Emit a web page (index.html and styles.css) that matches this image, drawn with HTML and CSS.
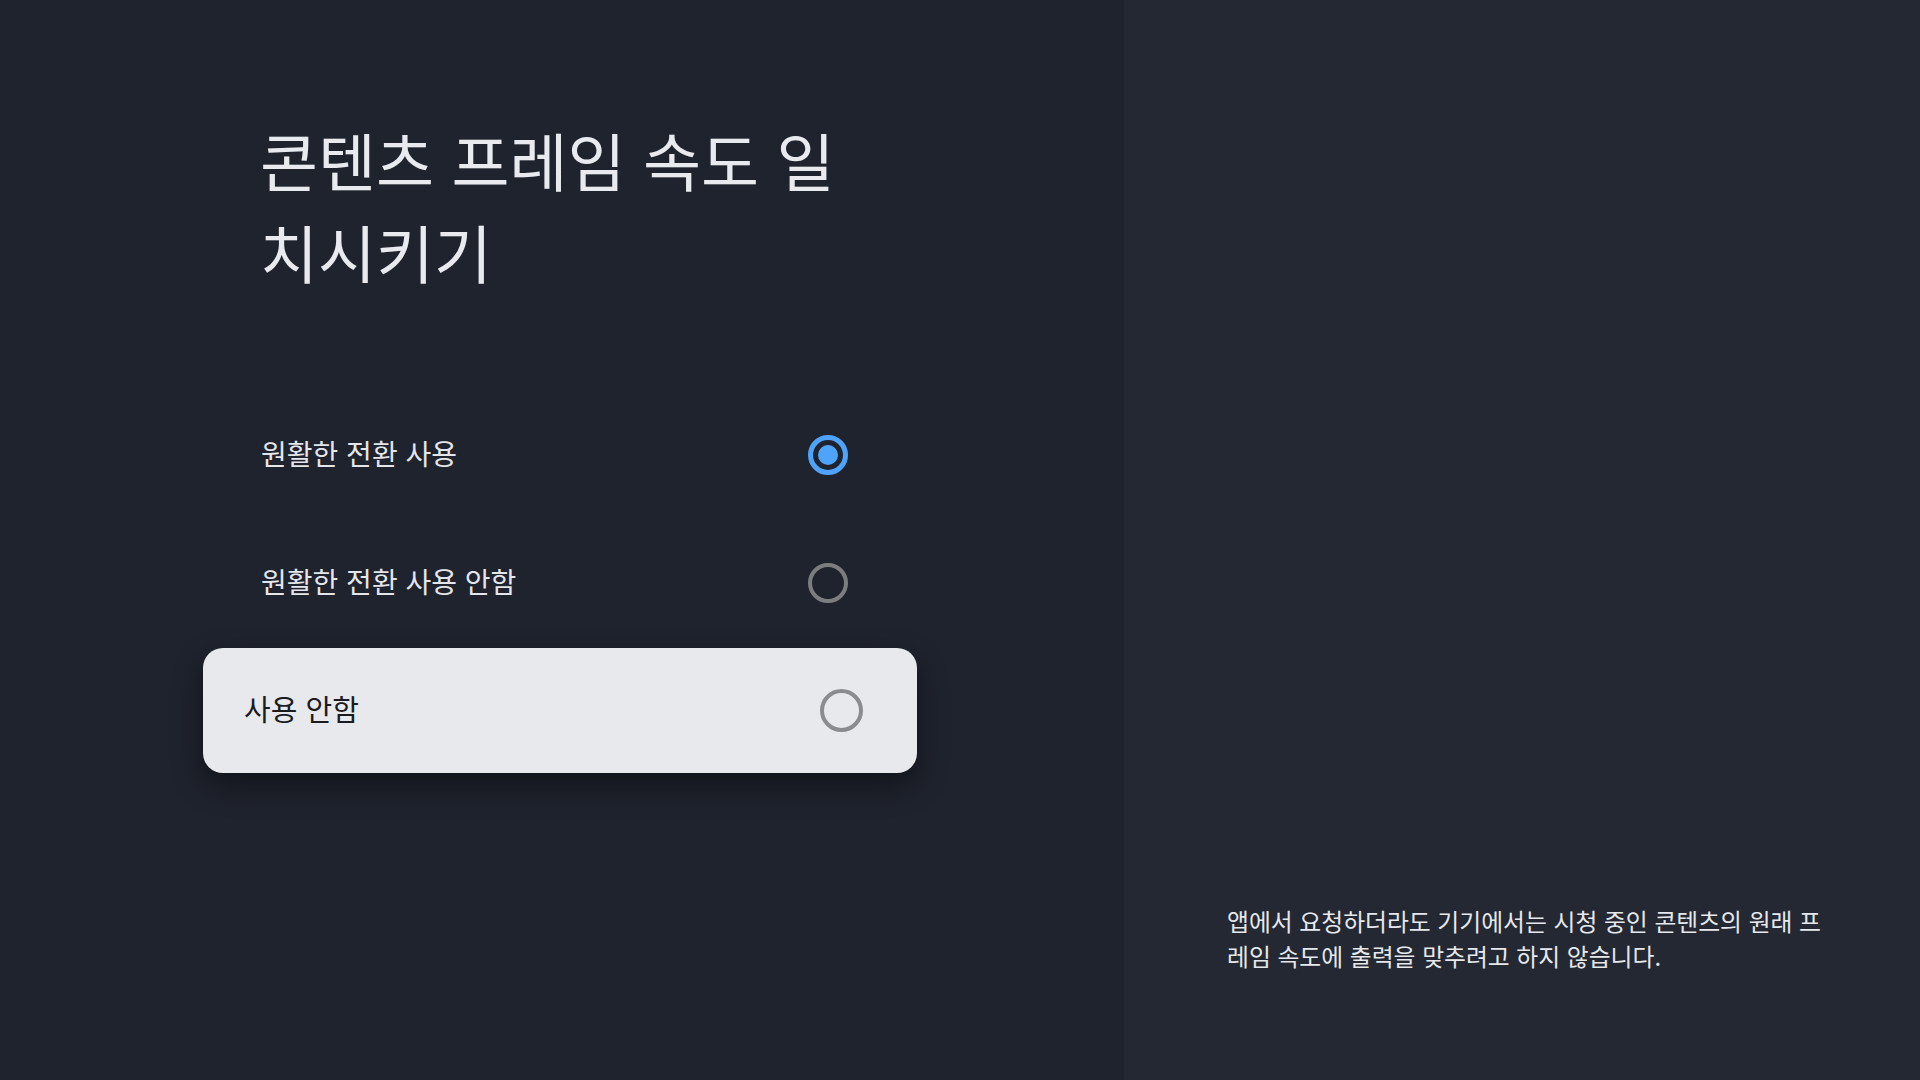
FILE: index.html
```html
<!DOCTYPE html>
<html lang="ko">
<head>
<meta charset="utf-8">
<title>콘텐츠 프레임 속도 일치시키기</title>
<link rel="stylesheet" href="styles.css">
</head>
<body>
<div class="screen">
  <section class="main">
    <h1 class="title">콘텐츠 프레임 속도 일치시키기</h1>
    <ul class="options">
      <li class="option">
        <span class="label">원활한 전환 사용</span>
        <span class="radio radio-on"><span class="dot"></span></span>
      </li>
      <li class="option">
        <span class="label">원활한 전환 사용 안함</span>
        <span class="radio"></span>
      </li>
      <li class="option option-focused">
        <span class="label">사용 안함</span>
        <span class="radio"></span>
      </li>
    </ul>
  </section>
  <aside class="side">
    <p class="desc">앱에서 요청하더라도 기기에서는 시청 중인 콘텐츠의 원래 프<br>레임 속도에 출력을 맞추려고 하지 않습니다.</p>
  </aside>
</div>
</body>
</html>
```
FILE: styles.css
```css
* { box-sizing: border-box; }
html, body {
  margin: 0;
  padding: 0;
  width: 1920px;
  height: 1080px;
  overflow: hidden;
}
body {
  font-family: "Noto Sans CJK KR", "Noto Sans", sans-serif;
  background: #1f232d;
}
.screen {
  display: flex;
  width: 1920px;
  height: 1080px;
}
.main {
  width: 1124px;
  background: #1f232d;
  padding: 113px 0 0 203px;
  display: flex;
  flex-direction: column;
}
.title {
  margin: 0 0 0 57px;
  width: 610px;
  font-size: 63px;
  line-height: 92px;
  font-weight: 400;
  color: #e8eaf0;
}
.options {
  list-style: none;
  margin: 94px 0 0 0;
  padding: 0;
  width: 714px;
}
.option {
  height: 128px;
  display: flex;
  align-items: center;
  justify-content: space-between;
  padding: 0 69px 0 58px;
}
.label {
  font-size: 28px;
  color: #e4e6eb;
  padding-bottom: 5px;
}
.radio {
  width: 40px;
  height: 40px;
  border-radius: 50%;
  border: 4px solid #7c7d80;
  display: flex;
  align-items: center;
  justify-content: center;
}
.radio-on {
  border: 5px solid #4ea4fb;
}
.dot {
  width: 20px;
  height: 20px;
  border-radius: 50%;
  background: #4ea4fb;
}
.option-focused {
  height: 125px;
  margin-top: 1px;
  background: #e8e9ed;
  border-radius: 20px;
  padding: 0 54px 0 41px;
  box-shadow: 0 12px 30px rgba(0, 0, 0, 0.45);
}
.option-focused .label {
  font-size: 29px;
  color: #1b1c1f;
  padding-bottom: 5px;
}
.option-focused .radio {
  width: 43px;
  height: 43px;
  border: 4px solid #8b8c8f;
}
.side {
  flex: 1;
  background: #232833;
  display: flex;
  flex-direction: column;
  justify-content: flex-end;
  padding: 0 20px 107px 103px;
}
.desc {
  margin: 0;
  font-size: 23.8px;
  line-height: 35px;
  color: #e6e8ec;
}
```
